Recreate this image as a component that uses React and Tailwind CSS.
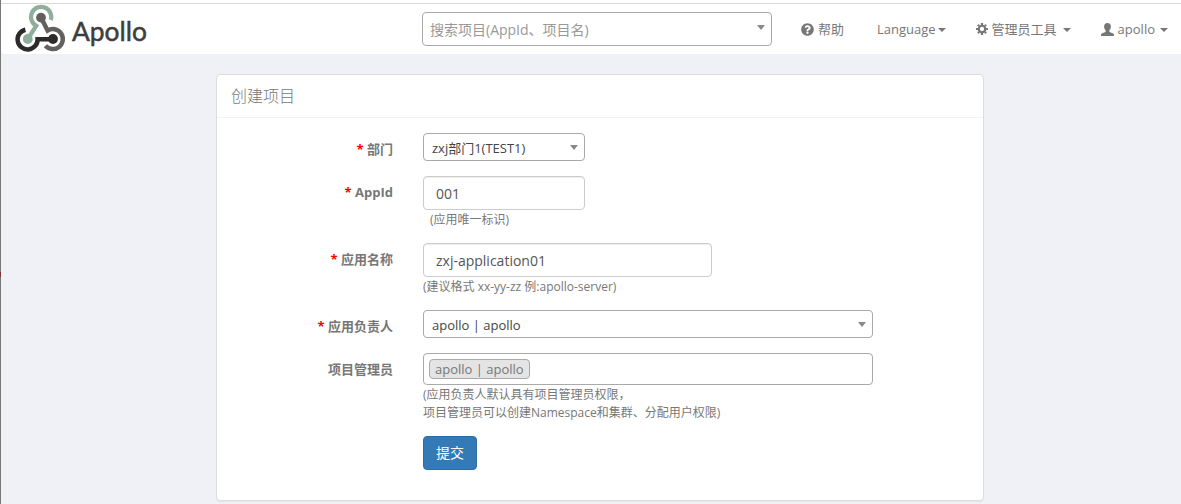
import { FaQuestionCircle } from "react-icons/fa";

const Logo = () => (
  <svg width="136" height="50" viewBox="14 4 136 50" fill="none" aria-label="Apollo">
    <path d="M53 39.2H37.6A10 10 0 1 1 25.4 29.7" stroke="#2d2b2a" strokeWidth="4.5" />
    <circle cx="53" cy="39" r="4.9" fill="#2d2b2a" />
    <path d="M41 17.5L47.6 30.6A10 10 0 1 1 45.4 45.8" stroke="#636160" strokeWidth="4.5" />
    <circle cx="41" cy="17.6" r="4.9" fill="#636160" />
    <path d="M27.8 39L36.2 25.8A10.1 10.1 0 1 1 50.8 20" stroke="#90ae9c" strokeWidth="4.3" />
    <circle cx="27.8" cy="39" r="4.9" fill="#90ae9c" />
    <text
      x="72"
      y="40.6"
      fontFamily="Lato, sans-serif"
      fontSize="26.5"
      fill="#3f3d3c"
      stroke="#3f3d3c"
      strokeWidth="0.5"
      textLength="75"
      lengthAdjust="spacingAndGlyphs"
    >
      Apollo
    </text>
  </svg>
);

const CogIcon = () => (
  <svg width="12" height="12" viewBox="0 0 14 14" fill="none" stroke="currentColor">
    <circle cx="7" cy="7" r="3.8" strokeWidth="2.6" />
    <path
      d="M7 0v2.2M7 11.8V14M0 7h2.2M11.8 7H14M2.2 2.2l1.4 1.4M10.4 10.4l1.4 1.4M2.2 11.8l1.4-1.4M10.4 3.6l1.4-1.4"
      strokeWidth="2.6"
    />
  </svg>
);

const UserIcon = () => (
  <svg width="13" height="13" viewBox="0 0 13 13" fill="currentColor">
    <path d="M6.5 0C8.7 0 9.9 1.4 9.9 3.4c0 1.7-.7 3.1-1.6 4v.9c0 .5.3.7.8.9l2.6 1.1c.8.4 1.3.8 1.3 1.6V13H0v-1.1c0-.8.5-1.2 1.3-1.6l2.6-1.1c.5-.2.8-.4.8-.9v-.9c-.9-.9-1.6-2.3-1.6-4C3.1 1.4 4.3 0 6.5 0z" />
  </svg>
);

const Caret = () => (
  <span className="mt-0.5 inline-block border-x-4 border-t-4 border-x-transparent border-t-[#777]" />
);

const SelectArrow = () => (
  <span className="block border-x-4 border-t-5 border-x-transparent border-t-[#888]" />
);

const Label = ({ required, children }) => (
  <label className="w-[176px] shrink-0 text-right font-bold leading-[18px] pt-[7px]">
    {required && <span className="text-[#f00]">* </span>}
    {children}
  </label>
);

const Row = ({ label, required, className, children }) => (
  <div className={`flex gap-[30px] ${className}`}>
    <Label required={required}>{label}</Label>
    <div>{children}</div>
  </div>
);

const Select = ({ className, children }) => (
  <div
    className={`flex h-7 items-center justify-between rounded-[4px] border border-[#aaa] bg-white pl-2 pr-1.5 text-[#444] ${className}`}
  >
    <span className="pt-[3px]">{children}</span>
    <SelectArrow />
  </div>
);

const Input = ({ className, children }) => (
  <div
    className={`flex h-[34px] items-center rounded-[4px] border border-[#ccc] bg-white px-3 text-sm text-[#555] shadow-[inset_0_1px_1px_rgba(0,0,0,0.075)] ${className}`}
  >
    <span className="pt-px">{children}</span>
  </div>
);

const Hint = ({ className = "", children }) => (
  <p className={`pt-px text-xs leading-[18px] ${className}`}>{children}</p>
);

export default function App() {
  return (
    <div className="flex h-[504px] overflow-hidden bg-[#f0f1f7] font-['Open_Sans','Noto_Sans_CJK_SC',sans-serif] text-[13px] text-[#777]">
      <div className="w-px shrink-0 bg-[#777] pt-[272px]">
        <div className="h-[5px] bg-[#7d3038]" />
      </div>
      <div className="flex-1">
        <div className="h-[3px] bg-white" />
        <nav className="flex h-[51px] rounded-bl-[4px] border-t border-[#d9d9d9] bg-white">
          <div className="w-[421px] pl-[13px]">
            <Logo />
          </div>
          <div className="mt-2 flex h-[34px] w-[350px] justify-between rounded-[4px] border border-[#aaa] pl-[7px] pr-1.5 text-sm leading-[34px] text-[#999]">
            <span>搜索项目(AppId、项目名)</span>
            <span className="pt-3">
              <SelectArrow />
            </span>
          </div>
          <ul className="flex h-[50px] flex-1 items-center justify-end pr-[13px]">
            <li className="flex items-center gap-1">
              <FaQuestionCircle size={13} />
              <span className="pt-0.5">帮助</span>
            </li>
            <li className="ml-[33px] flex items-center gap-0.5">
              <span className="pt-0.5">Language</span>
              <Caret />
            </li>
            <li className="ml-[30px] flex items-center gap-1">
              <CogIcon />
              <span className="pt-0.5">管理员工具</span>
              <span className="ml-0.5 flex">
                <Caret />
              </span>
            </li>
            <li className="ml-[30px] flex items-center gap-1">
              <UserIcon />
              <span className="pt-0.5">apollo</span>
              <span className="ml-px flex">
                <Caret />
              </span>
            </li>
          </ul>
        </nav>

        <section className="ml-[215px] mt-5 h-[427px] w-[768px] rounded-[4px] border border-[#ddd] bg-white shadow-[0_1px_1px_rgba(0,0,0,0.05)]">
          <header className="h-[43px] border-b border-[#eff2f7] px-[14px] text-base font-light leading-[43px]">
            创建项目
          </header>
          <form className="pt-[15px]">
            <Row label="部门" required className="h-[43px]">
              <Select className="w-[162px]">zxj部门1(TEST1)</Select>
            </Row>
            <Row label="AppId" required className="h-[67px]">
              <Input className="w-[162px]">001</Input>
              <Hint className="pl-[7px]">(应用唯一标识)</Hint>
            </Row>
            <Row label="应用名称" required className="h-[67px]">
              <Input className="w-[289px]">zxj-application01</Input>
              <Hint>(建议格式 xx-yy-zz 例:apollo-server)</Hint>
            </Row>
            <Row label="应用负责人" required className="h-[43px]">
              <Select className="w-[450px]">apollo | apollo</Select>
            </Row>
            <Row label="项目管理员" className="h-[83px]">
              <div className="flex h-8 w-[450px] rounded-[4px] border border-[#aaa] px-[5px] pt-[5px]">
                <span className="h-5 rounded-[4px] border border-[#aaa] bg-[#e4e4e4] px-[5px] leading-[19px]">
                  apollo | apollo
                </span>
              </div>
              <Hint>
                (应用负责人默认具有项目管理员权限，
                <br />
                项目管理员可以创建Namespace和集群、分配用户权限)
              </Hint>
            </Row>
            <button
              type="button"
              className="ml-[206px] h-[34px] w-[54px] rounded-[4px] border border-[#2e6da4] bg-[#337ab7] text-sm text-white"
            >
              提交
            </button>
          </form>
        </section>
      </div>
    </div>
  );
}
